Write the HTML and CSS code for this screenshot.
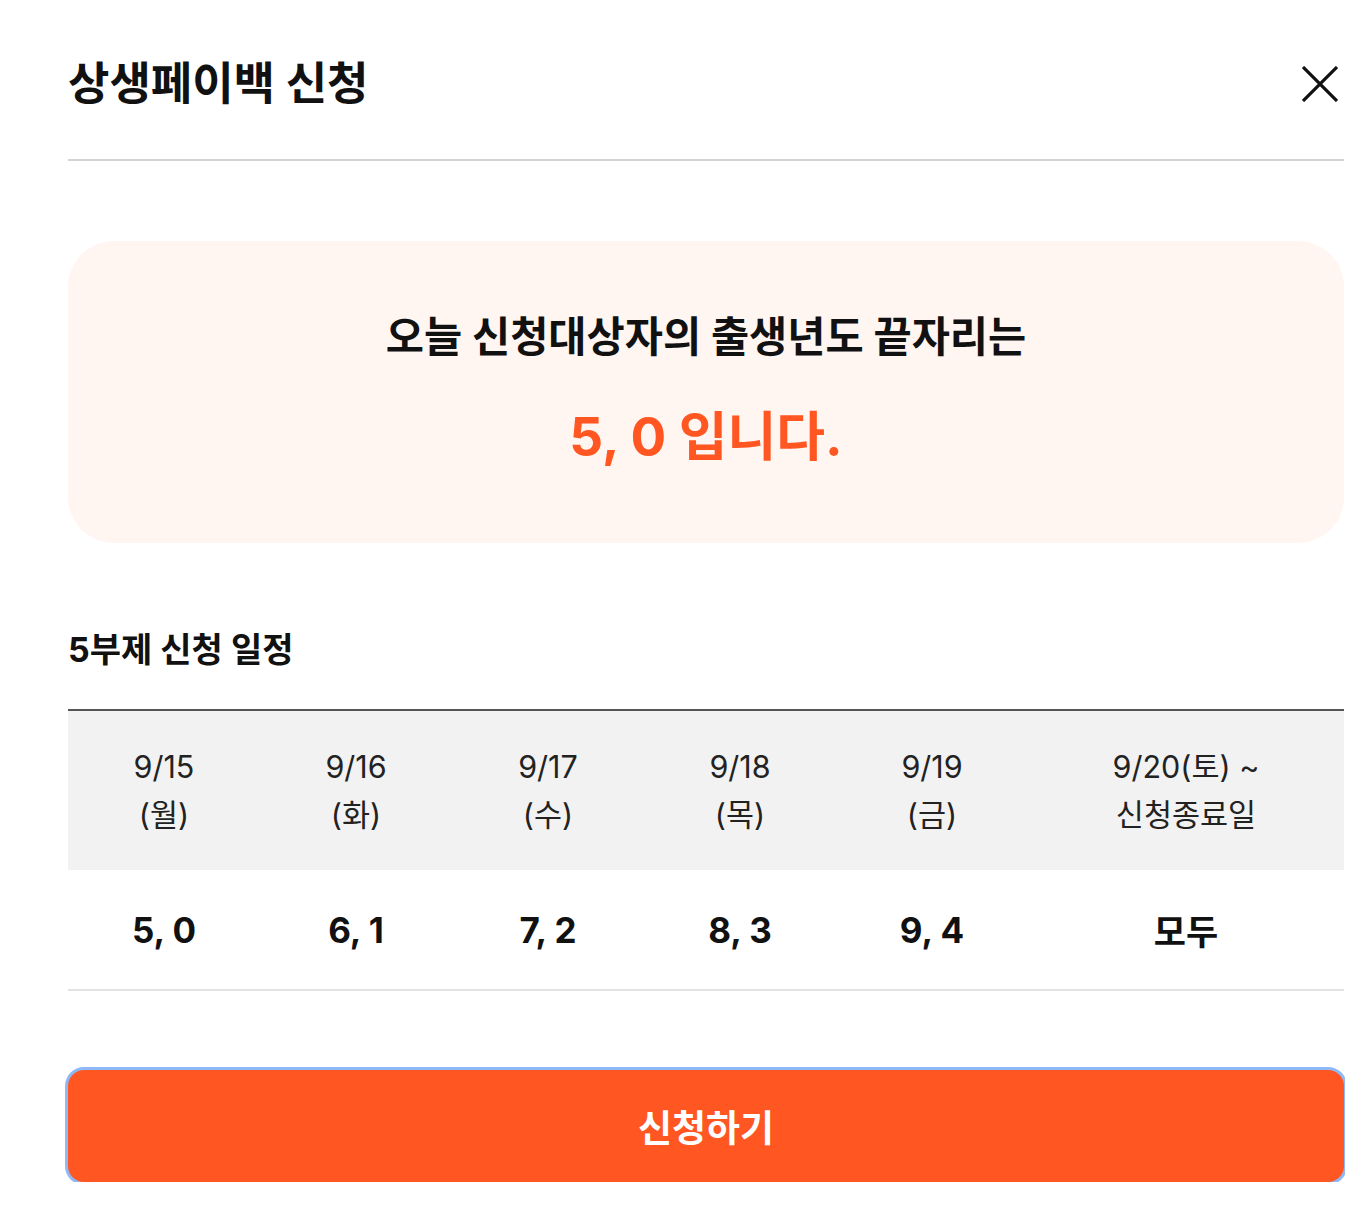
FILE: index.html
```html
<!DOCTYPE html>
<html lang="ko">
<head>
<meta charset="utf-8">
<title>상생페이백 신청</title>
<link rel="stylesheet" href="styles.css">
</head>
<body>
<div class="modal">
  <div class="inner">
    <header class="head">
      <h1 class="title">상생페이백 신청</h1>
      <button class="close" aria-label="닫기">
        <svg width="36" height="36" viewBox="0 0 36 36" fill="none" stroke="#111" stroke-width="3.2" stroke-linecap="butt">
          <path d="M1 1 L35 35 M35 1 L1 35"/>
        </svg>
      </button>
    </header>

    <section class="notice">
      <p class="notice-line">오늘 신청대상자의 출생년도 끝자리는</p>
      <p class="notice-num">5, 0 입니다.</p>
    </section>

    <h2 class="sub">5부제 신청 일정</h2>

    <div class="table">
      <div class="row thead">
        <div class="cell">9/15<br>(월)</div>
        <div class="cell">9/16<br>(화)</div>
        <div class="cell">9/17<br>(수)</div>
        <div class="cell">9/18<br>(목)</div>
        <div class="cell">9/19<br>(금)</div>
        <div class="cell">9/20(토) ~<br>신청종료일</div>
      </div>
      <div class="row tbody">
        <div class="cell">5, 0</div>
        <div class="cell">6, 1</div>
        <div class="cell">7, 2</div>
        <div class="cell">8, 3</div>
        <div class="cell">9, 4</div>
        <div class="cell">모두</div>
      </div>
    </div>

    <button class="apply">신청하기</button>
  </div>
</div>
</body>
</html>
```

FILE: styles.css
```css
html, body {
  margin: 0;
  padding: 0;
  background: #fff;
}
body {
  font-family: Inter, "Noto Sans CJK KR", sans-serif;
  color: #111;
}
.modal {
  width: 1345px;
  padding-left: 68px;
  box-sizing: border-box;
  overflow: hidden;
}
.inner {
  width: 1276px;
}
.head {
  display: flex;
  align-items: center;
  justify-content: space-between;
  padding: 60px 0 51px;
  border-bottom: 2px solid #d2d2d2;
}
.title {
  margin: 0;
  font-size: 45px;
  line-height: 48px;
  font-weight: 700;
}
.close {
  border: 0;
  background: none;
  padding: 0;
  margin-right: 6px;
  width: 36px;
  height: 36px;
  display: flex;
}
.notice {
  margin-top: 80px;
  height: 302px;
  box-sizing: border-box;
  background: #fff5f1;
  border-radius: 46px;
  padding-top: 72px;
  text-align: center;
}
.notice p {
  margin: 0;
}
.notice-line {
  font-size: 41.5px;
  line-height: 48px;
  font-weight: 700;
}
.notice-num {
  margin-top: 44px !important;
  font-size: 53px;
  line-height: 64px;
  font-weight: 700;
  color: #ff5622;
}
.sub {
  margin: 87px 0 0;
  font-size: 34px;
  line-height: 40px;
  font-weight: 700;
}
.table {
  margin-top: 39px;
  border-top: 2px solid #555;
  border-bottom: 2px solid #e2e2e2;
}
.row {
  display: grid;
  grid-template-columns: 192px 192px 192px 192px 192px 1fr;
  align-items: center;
  text-align: center;
}
.thead {
  background: #f2f2f2;
  height: 159px;
  font-size: 30.5px;
  line-height: 48px;
  color: #222;
}
.tbody {
  height: 119px;
  font-size: 35px;
  font-weight: 700;
}
.apply {
  display: block;
  margin-top: 79px;
  width: 1276px;
  height: 112px;
  border: 0;
  border-radius: 16px;
  background: #ff5622;
  color: #fff;
  font-family: Inter, "Noto Sans CJK KR", sans-serif;
  font-size: 37px;
  font-weight: 700;
  box-shadow: 0 0 0 3px #8fb8f6;
}
```
